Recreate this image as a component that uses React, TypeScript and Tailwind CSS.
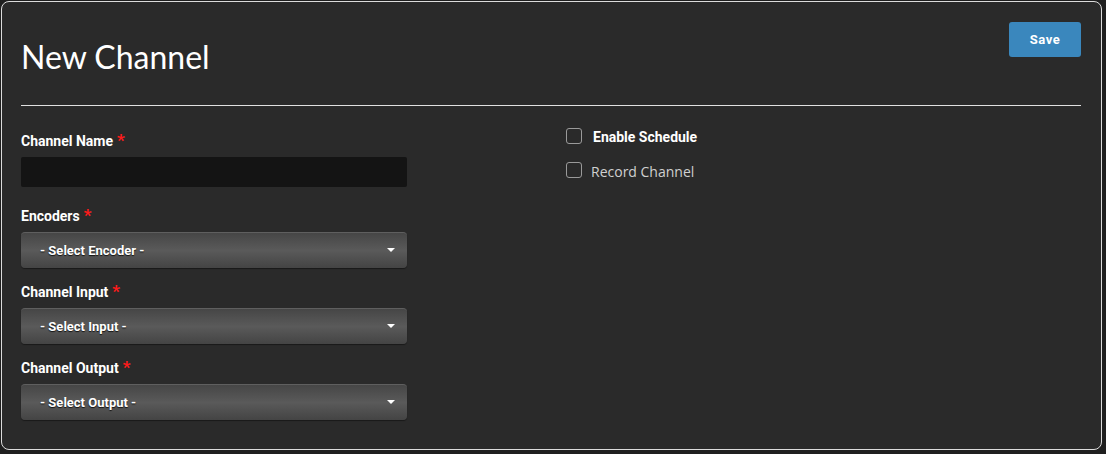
const Label = ({ text }: { text: string }) => (
	<label className="flex items-start text-[14px] font-bold leading-4 text-white">
		{text}
		<span className="ml-1 text-[17px] leading-[14px] text-[#ff1a1a]">*</span>
	</label>
);

const SelectBox = ({ placeholder }: { placeholder: string }) => (
	<div className="relative mt-[8px] flex h-9 w-[386px] items-center rounded-[4px] border-t border-[#5f5f5f] bg-[linear-gradient(to_bottom,#464646_0%,#5a5a5a_50%,#444444_100%)] pl-[19px] shadow-[0_1px_1px_rgba(0,0,0,0.4)]">
		<span className="text-[13px] font-bold text-white [text-shadow:0_1px_1px_rgba(0,0,0,0.8)]">
			{placeholder}
		</span>
		<span className="absolute right-[12px] top-[15px] h-0 w-0 border-x-[4px] border-t-[4px] border-x-transparent border-t-white" />
	</div>
);

const Checkbox = ({ label, bold }: { label: string; bold?: boolean }) => (
	<label className="flex items-center">
		<span className="h-4 w-4 -translate-y-[2px] rounded-[3px] border border-[#9a9a9a] bg-transparent" />
		{bold ? (
			<span className="ml-[11px] text-[14px] font-bold text-white">{label}</span>
		) : (
			<span className="ml-[9px] font-['Open_Sans',sans-serif] text-[14px] text-[#d0d0d0]">
				{label}
			</span>
		)}
	</label>
);

export default function App() {
	return (
		<div className="h-[454px] w-full bg-[#1f1f1f] pl-px pt-px font-['Roboto',sans-serif]">
			<div className="h-[449px] w-[1101px] rounded-[8px] border border-[#dcdcdc] bg-[#2a2a2a] pl-[19px] pr-[20px]">
				<div className="flex items-start justify-between">
					<h1 className="mt-[37px] font-['Lato',sans-serif] text-[32px] leading-9 text-white">
						New Channel
					</h1>
					<button className="mt-[20px] h-[35px] w-[72px] rounded-[3px] bg-[#3a87bd] text-[13px] font-bold tracking-[0.5px] text-white">
						Save
					</button>
				</div>
				<hr className="mt-[30px] border-t border-[#e0e0e0]" />
				<div className="flex">
					<div className="w-[545px]">
						<div className="mt-[27px]">
							<Label text="Channel Name" />
							<div className="mt-[8px] h-[30px] w-[386px] rounded-[2px] bg-[#141414]" />
						</div>
						<div className="mt-[21px]">
							<Label text="Encoders" />
							<SelectBox placeholder="- Select Encoder -" />
						</div>
						<div className="mt-[16px]">
							<Label text="Channel Input" />
							<SelectBox placeholder="- Select Input -" />
						</div>
						<div className="mt-[16px]">
							<Label text="Channel Output" />
							<SelectBox placeholder="- Select Output -" />
						</div>
					</div>
					<div className="mt-[21px] flex flex-col gap-[13px]">
						<Checkbox label="Enable Schedule" bold />
						<Checkbox label="Record Channel" />
					</div>
				</div>
			</div>
		</div>
	);
}
